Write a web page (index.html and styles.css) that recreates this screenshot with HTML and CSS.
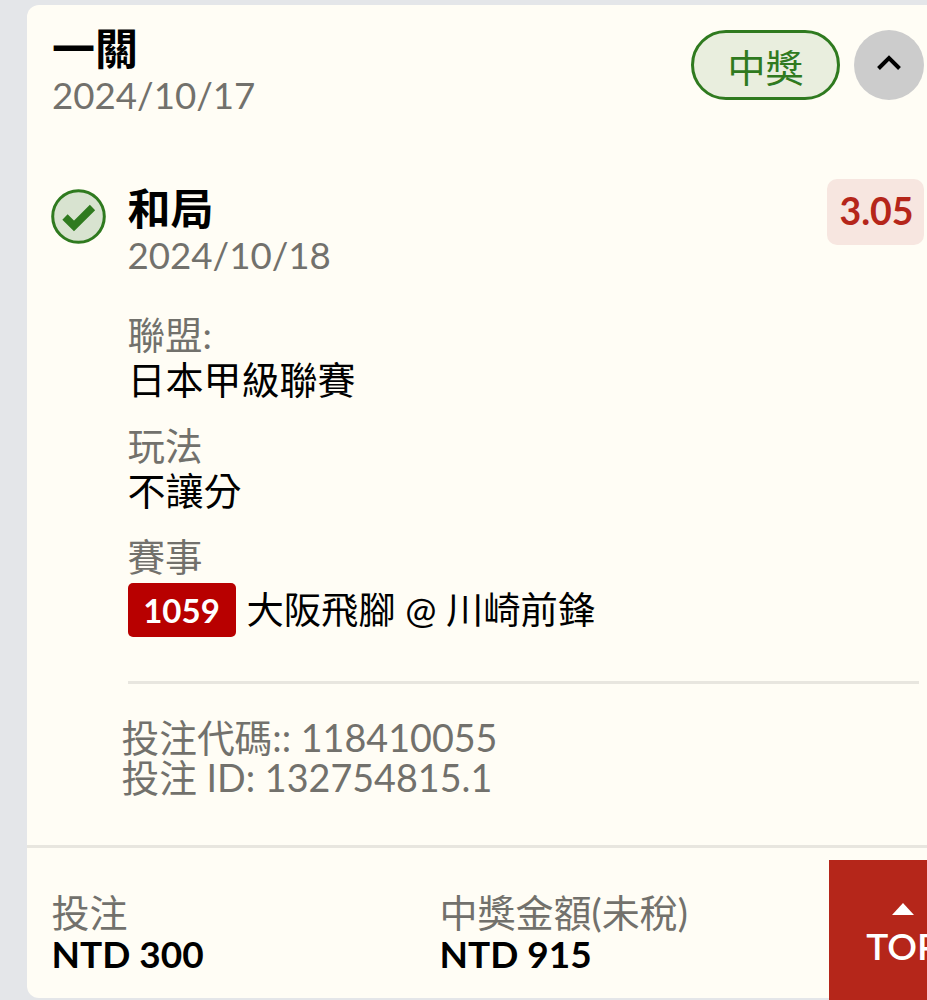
FILE: index.html
```html
<!DOCTYPE html>
<html lang="zh-Hant">
<head>
  <meta charset="UTF-8">
  <meta name="viewport" content="width=device-width, initial-scale=1.0">
  <title>投注紀錄</title>
  <link rel="stylesheet" href="styles.css">
</head>
<body>
  <div class="card">
    <div class="card-head">
      <div class="head-text">
        <h1 class="title">一關</h1>
        <div class="date">2024/10/17</div>
      </div>
      <div class="head-actions">
        <span class="status-pill">中獎</span>
        <button class="toggle" type="button" aria-label="收合">
          <svg width="26" height="18" viewBox="0 0 26 18"><path d="M2.5 15.5 13 5l10.5 10.5" fill="none" stroke="#000" stroke-width="4"/></svg>
        </button>
      </div>
    </div>

    <div class="selection">
      <svg class="check" width="55" height="55" viewBox="0 0 55 55">
        <circle cx="27.5" cy="27.5" r="25.8" fill="#d8e3d0" stroke="#2f7a1f" stroke-width="3"/>
        <path d="M14 28 23 37 41.5 18.5" fill="none" stroke="#2f7a1f" stroke-width="7.5"/>
      </svg>
      <div class="selection-body">
        <div class="selection-head">
          <div>
            <h2 class="title">和局</h2>
            <div class="date">2024/10/18</div>
          </div>
          <span class="odds">3.05</span>
        </div>

        <div class="field">
          <div class="label">聯盟:</div>
          <div class="value">日本甲級聯賽</div>
        </div>
        <div class="field">
          <div class="label">玩法</div>
          <div class="value">不讓分</div>
        </div>
        <div class="field">
          <div class="label">賽事</div>
          <div class="value match">
            <span class="match-no">1059</span>
            <span>大阪飛腳 @ 川崎前鋒</span>
          </div>
        </div>
        <hr class="divider">
        <div class="codes">
          <div>投注代碼:: 118410055</div>
          <div>投注 ID: 132754815.1</div>
        </div>
      </div>
    </div>

    <div class="card-foot">
      <div>
        <div class="label foot-label">投注</div>
        <div class="amount">NTD 300</div>
      </div>
      <div>
        <div class="label foot-label">中獎金額(未稅)</div>
        <div class="amount">NTD 915</div>
      </div>
    </div>
  </div>

  <a class="top-btn" href="#">
    <span class="top-arrow"></span>
    TOP
  </a>
</body>
</html>
```

FILE: styles.css
```css
html, body {
  height: 1000px;
  overflow: hidden;
}

body {
  position: relative;
  margin: 0;
  background: #e4e6e9;
  color: #000;
  font-family: Lato, "Noto Sans CJK TC", sans-serif;
}

.card {
  box-sizing: border-box;
  width: 920px;
  height: 993px;
  margin: 5px 0 0 27px;
  padding-top: 19px;
  background: #fffdf5;
  border-radius: 12px;
}

.card-head {
  display: flex;
  justify-content: space-between;
  width: 897px;
  padding-left: 25px;
  box-sizing: border-box;
}

.title {
  margin: 0;
  font-size: 43px;
  line-height: 50px;
  font-weight: 700;
}

.date {
  color: #72716c;
  font-size: 36.7px;
  line-height: 42px;
}

.head-actions {
  display: flex;
  gap: 14px;
  margin-top: 6px;
}

.status-pill {
  box-sizing: border-box;
  display: flex;
  align-items: center;
  justify-content: center;
  width: 149px;
  height: 70px;
  border: 3px solid #2f7a1f;
  border-radius: 35px;
  background: #e9eede;
  color: #2f7a1f;
  font-size: 38px;
}

.toggle {
  display: flex;
  align-items: center;
  justify-content: center;
  width: 70px;
  height: 70px;
  padding: 0 0 6px;
  border: none;
  border-radius: 50%;
  background: #cccccc;
}

.selection {
  display: flex;
  gap: 21.5px;
  width: 897px;
  box-sizing: border-box;
  margin-top: 68px;
  padding-left: 24px;
}

.check {
  flex: none;
  margin-top: 5px;
}

.selection-body {
  flex: 1;
}

.selection-head {
  display: flex;
  justify-content: space-between;
  align-items: flex-start;
}

.odds {
  display: block;
  width: 97px;
  height: 66px;
  margin-top: -5px;
  border-radius: 10px;
  background: #f7e6e0;
  color: #b5261a;
  font-size: 37.5px;
  font-weight: 700;
  line-height: 64px;
  text-align: center;
  text-indent: 2px;
}

.field {
  margin-bottom: 23px;
}

.selection-head + .field {
  margin-top: 37px;
}

.label {
  color: #72716c;
  font-size: 37.5px;
  line-height: 44px;
}

.foot-label {
  font-size: 38px;
}

.value {
  font-size: 38px;
  line-height: 44px;
}

.match {
  display: flex;
  align-items: center;
  gap: 11px;
  height: 54px;
  margin-top: 4px;
  font-size: 37.3px;
}

.match-no {
  width: 108px;
  height: 54px;
  border-radius: 5px;
  background: #b80000;
  color: #fff;
  font-size: 33px;
  font-weight: 700;
  line-height: 54px;
  text-align: center;
}

.divider {
  height: 3px;
  margin: 44px 5px 0 0;
  border: none;
  background: #e8e6df;
}

.codes {
  margin: 34px 0 0 -6px;
  color: #72716c;
  font-size: 37.7px;
  line-height: 40px;
}

.card-foot {
  display: grid;
  grid-template-columns: 388px 1fr;
  margin-top: 47px;
  padding: 42px 0 0 24.5px;
  border-top: 3px solid #e8e6df;
}

.amount {
  margin-top: 1px;
  font-size: 37px;
  font-weight: 700;
  line-height: 38px;
}

.top-btn {
  position: absolute;
  top: 860px;
  left: 829px;
  width: 148px;
  height: 140px;
  padding-top: 43px;
  box-sizing: border-box;
  background: #b5261a;
  color: #fff;
  font-size: 37px;
  font-weight: 600;
  line-height: 44px;
  text-align: center;
  text-decoration: none;
}

.top-arrow {
  display: block;
  width: 0;
  height: 0;
  margin: 0 auto 9px;
  border-left: 11px solid transparent;
  border-right: 11px solid transparent;
  border-bottom: 12px solid #fff;
}
```
